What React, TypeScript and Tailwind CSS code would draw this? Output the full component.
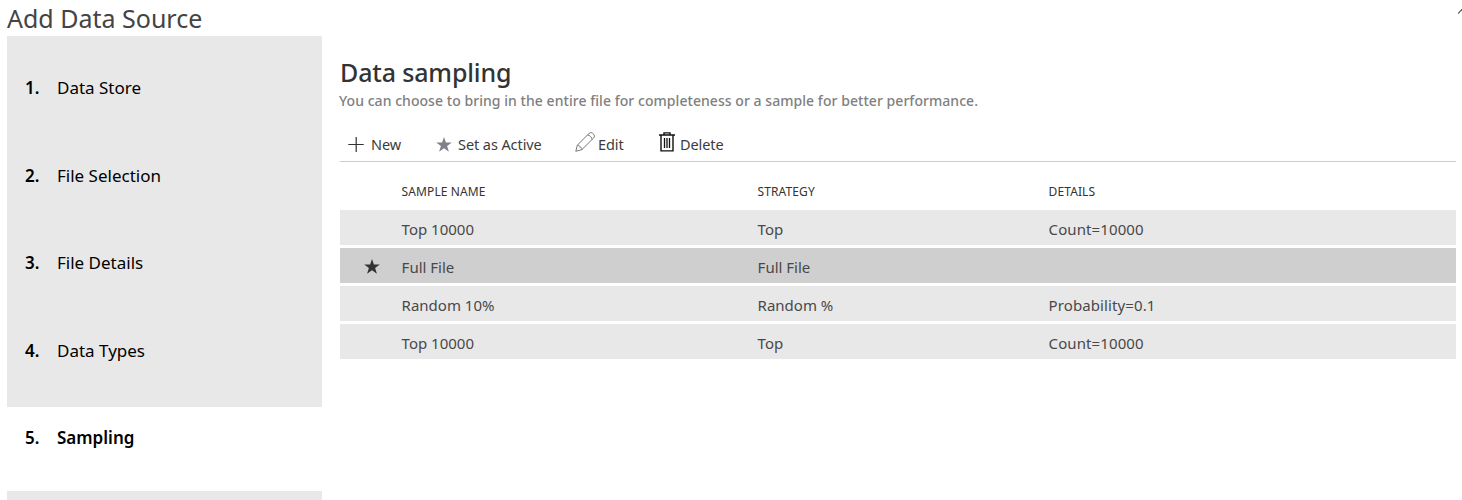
import type { ReactNode } from "react";

const steps = ["Data Store", "File Selection", "File Details", "Data Types", "Sampling"];

const rows = [
  { name: "Top 10000", strategy: "Top", details: "Count=10000", active: false },
  { name: "Full File", strategy: "Full File", details: "", active: true },
  { name: "Random 10%", strategy: "Random %", details: "Probability=0.1", active: false },
  { name: "Top 10000", strategy: "Top", details: "Count=10000", active: false },
];

function Star({ className }: { className: string }) {
  return (
    <svg viewBox="0 0 16 15" className={className} fill="currentColor">
      <path d="M8 0 9.9 5.6H15.8L11.1 9.1 12.9 14.7 8 11.3 3.1 14.7 4.9 9.1.2 5.6H6.1Z" />
    </svg>
  );
}

function Plus() {
  return (
    <svg viewBox="0 0 16 16" className="mt-[8px] h-4 w-4" stroke="#333" strokeWidth="1.2" fill="none">
      <path d="M.3 8.5H15.7M8.2 1V16" />
    </svg>
  );
}

function Pencil() {
  return (
    <svg viewBox="0 0 20 20" className="mt-[4px] h-5 w-5" stroke="#777" strokeWidth="1" fill="none" strokeLinejoin="round">
      <path d="M.8 19.3 2.3 13.2 14 1.5C15.2.4 16.6.4 17.7 1.3L18.6 2.2C19.7 3.4 19.7 4.8 18.6 6L6.9 17.6Z" />
      <path d="M2.3 13.2C4.2 13.2 5 13.9 4.8 15.3 6.2 15.2 6.9 16 6.9 17.6M12.6 3C14.4 2.9 17.2 5.6 17.1 7.4" />
    </svg>
  );
}

function Trash() {
  return (
    <svg viewBox="0 0 16 20" className="mt-[4px] h-5 w-4" stroke="#111" strokeWidth="1.4" fill="none">
      <path d="M0 3H16M5 3V.9H11V3M2 3V18.9H14V3" />
      <path d="M5.5 6V16M8 6V16M10.5 6V16" strokeWidth="1.3" />
    </svg>
  );
}

function Action({ icon, label, className }: { icon: ReactNode; label: string; className: string }) {
  return (
    <button className={`flex h-8 items-start whitespace-nowrap text-[14.5px] leading-[32px] tracking-[-0.08px] text-[#3c3c3c] ${className}`}>
      {icon}
      <span>{label}</span>
    </button>
  );
}

export default function App() {
  return (
    <div className="flex h-[500px] w-[1462px] flex-col overflow-hidden bg-white font-['Noto_Sans','Open_Sans',sans-serif]">
      <header className="flex h-9 shrink-0 items-start justify-between pl-[7px]">
        <h1 className="pt-px text-[25px] leading-[34px] text-[#444]">Add Data Source</h1>
        <svg viewBox="0 0 4 5" className="mt-[9px] h-[5px] w-1" stroke="#555" strokeWidth="1.2" fill="none">
          <path d="M0 4.5 4.5 0" />
        </svg>
      </header>
      <div className="flex min-h-0 flex-1">
        <nav className="ml-[7px] w-[315px] shrink-0 overflow-hidden bg-[#e8e8e8] pt-[21px] text-[17px] leading-6 text-black">
          <ol>
            {steps.map((step, i) => {
              const current = i === steps.length - 1;
              return (
                <li
                  key={step}
                  className={`flex pt-[19px] pl-[18px] ${current ? "h-[84px] bg-white font-semibold" : "h-[87.5px]"}`}
                >
                  <span className="w-8 font-semibold">{i + 1}.</span>
                  <span>{step}</span>
                </li>
              );
            })}
          </ol>
        </nav>
        <main className="ml-[18px] w-[1116px]">
          <h2 className="pt-[19px] text-[25px] leading-[34px] font-medium tracking-[-0.15px] text-[#333]">Data sampling</h2>
          <p className="mt-px -ml-px h-[36px] text-[14px] leading-[22px] font-medium tracking-[0.05px] whitespace-nowrap text-[#808080]">
            You can choose to bring in the entire file for completeness or a sample for better performance.
          </p>
          <div className="flex h-[36px] border-b border-[#ccc] pt-[2px] pl-[8px]">
            <Action className="w-[88px] gap-[7px]" icon={<Plus />} label="New" />
            <Action className="w-[139px] gap-[6px]" icon={<Star className="mt-[9px] h-[15px] w-4 text-[#808287]" />} label="Set as Active" />
            <Action className="w-[84px] gap-[3px]" icon={<Pencil />} label="Edit" />
            <Action className="gap-[5px]" icon={<Trash />} label="Delete" />
          </div>
          <div className="grid h-12 grid-cols-[61.6px_356px_291px_1fr] pt-[21px] text-[12px] leading-[18px] tracking-[0.1px] text-[#333]">
            <span />
            <span>SAMPLE NAME</span>
            <span>STRATEGY</span>
            <span>DETAILS</span>
          </div>
          <div className="flex flex-col gap-[3px]">
            {rows.map((row, i) => (
              <div
                key={i}
                className={`grid h-[35px] grid-cols-[61.6px_356px_291px_1fr] pt-[2px] text-[15px] leading-[34px] text-[#484848] ${row.active ? "bg-[#cfcfcf]" : "bg-[#e8e8e8]"}`}
              >
                <span className="pl-[24px]">{row.active && <Star className="mt-[9px] h-[15px] w-4 text-[#333]" />}</span>
                <span>{row.name}</span>
                <span>{row.strategy}</span>
                <span className="tracking-[0.1px]">{row.details}</span>
              </div>
            ))}
          </div>
        </main>
      </div>
    </div>
  );
}
